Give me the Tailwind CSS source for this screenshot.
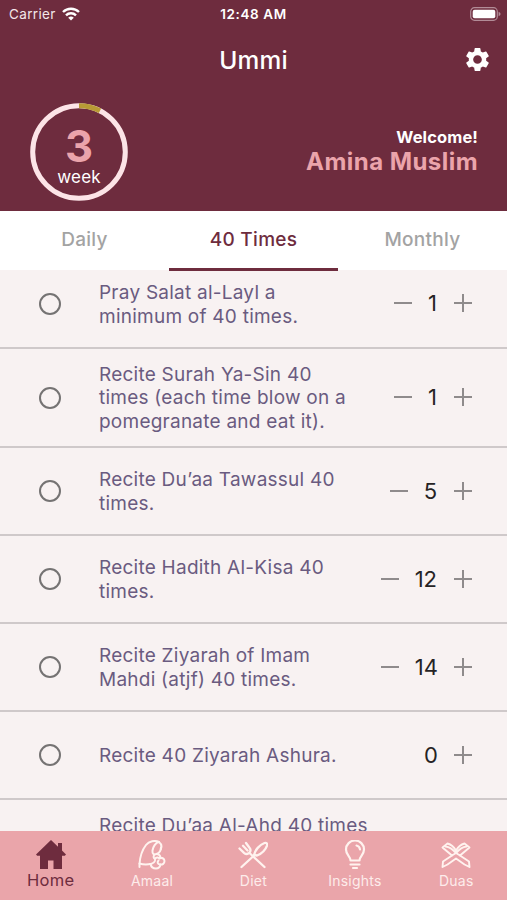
<!DOCTYPE html>
<html lang="en">
<head>
  <meta charset="UTF-8">
  <title>Ummi</title>
  <script src="https://cdn.jsdelivr.net/npm/@tailwindcss/browser@4"></script>
</head>
<body class="bg-[#f8f2f2]">
<div class="w-[507px] h-[900px] flex flex-col overflow-hidden font-['Inter','Liberation_Sans',sans-serif]">

  <!-- Header -->
  <header class="h-[211px] shrink-0 bg-[#6e2c3e] text-white">
    <div class="h-7 pl-[9px] pr-[6px] grid grid-cols-3 items-center">
      <div class="flex items-center gap-[6px]">
        <span class="text-[13.5px] tracking-[0.35px] text-[#f3e6e9]">Carrier</span>
        <svg class="w-[18px] h-[14px]" viewBox="0 0 18 14" fill="none" stroke="#fff" stroke-width="2.4">
          <path d="M1 5a11.4 11.4 0 0 1 16 0"/>
          <path d="M4 8.3a7.1 7.1 0 0 1 10 0"/>
          <path d="M9 13.6 6.2 10.8a4 4 0 0 1 5.6 0z" fill="#fff" stroke="none"/>
        </svg>
      </div>
      <div class="-ml-[3px] text-center whitespace-nowrap text-[13.5px] font-semibold tracking-[0.6px]">12:48 AM</div>
      <svg class="w-[31px] h-[14px] justify-self-end" viewBox="0 0 31 14">
        <rect x=".7" y=".7" width="26.6" height="12.6" rx="3.8" fill="none" stroke="#b28c97" stroke-width="1.2"/>
        <rect x="2.7" y="2.7" width="22.6" height="8.6" rx="2" fill="#fff"/>
        <path d="M28.6 4.8v4.4q2-.8 2-2.2t-2-2.2z" fill="#b28c97"/>
      </svg>
    </div>
    <div class="h-[64px] px-[15px] grid grid-cols-3 items-center">
      <h1 class="col-start-2 pt-px text-center text-[24.5px] font-medium tracking-[0.2px]">Ummi</h1>
      <svg class="w-[29px] h-[29px] -mt-px justify-self-end" viewBox="0 0 24 24" fill="#fff">
        <path d="M19.14 12.94c.04-.3.06-.61.06-.94 0-.32-.02-.64-.07-.94l2.03-1.58a.49.49 0 0 0 .12-.61l-1.92-3.32a.488.488 0 0 0-.59-.22l-2.39.96c-.5-.38-1.03-.7-1.62-.94l-.36-2.54a.484.484 0 0 0-.48-.41h-3.84c-.24 0-.43.17-.47.41l-.36 2.54c-.59.24-1.13.57-1.62.94l-2.39-.96c-.22-.08-.47 0-.59.22L2.74 8.87c-.12.21-.08.47.12.61l2.03 1.58c-.05.3-.09.63-.09.94s.02.64.07.94l-2.03 1.58a.49.49 0 0 0-.12.61l1.92 3.32c.12.22.37.29.59.22l2.39-.96c.5.38 1.03.7 1.62.94l.36 2.54c.05.24.24.41.48.41h3.84c.24 0 .44-.17.47-.41l.36-2.54c.59-.24 1.13-.56 1.62-.94l2.39.96c.22.08.47 0 .59-.22l1.92-3.32c.12-.22.07-.47-.12-.61l-2.01-1.58zM12 15.6c-1.98 0-3.6-1.62-3.6-3.6s1.62-3.6 3.6-3.6 3.6 1.62 3.6 3.6-1.62 3.6-3.6 3.6z"/>
      </svg>
    </div>
    <div class="pl-[30px] pr-[29px] pt-[11px] flex items-start justify-between">
      <div class="grid w-[98px] h-[98px]">
        <svg class="col-start-1 row-start-1 w-full h-full" viewBox="0 0 98 98" fill="none" stroke-width="5">
          <circle cx="49" cy="49" r="46.3" stroke="#fce4e7"/>
          <path d="M49 2.7a46.3 46.3 0 0 1 21 5" stroke="#b89a35"/>
        </svg>
        <div class="col-start-1 row-start-1 flex flex-col items-center pt-[26px]">
          <div class="text-[43.5px] leading-[34px] font-bold text-[#eba4ab]">3</div>
          <div class="mt-1 text-[17px] leading-[20px] tracking-[0.2px]">week</div>
        </div>
      </div>
      <div class="pt-[24px] text-right font-bold">
        <div class="text-[16.5px] leading-5 tracking-[0.1px]">Welcome!</div>
        <div class="mt-px text-[24px] leading-7 tracking-[0.45px] text-[#eba4ab]">Amina Muslim</div>
      </div>
    </div>
  </header>

  <!-- Tabs -->
  <nav class="h-[59px] shrink-0 bg-white grid grid-cols-3 text-center text-[19px] leading-[57px] font-medium tracking-[0.3px] text-[#a3a3a3]">
    <div>Daily</div>
    <div class="text-[#6e2c3e] border-b-[3px] border-[#6e2c3e]">40 Times</div>
    <div>Monthly</div>
  </nav>

  <!-- List, scrolled a little under the tabs -->
  <main class="flex-1 min-h-0 overflow-hidden text-[#6a5b80] text-[19px] leading-[23.3px] tracking-[0.24px]">
    <div class="h-[79px] pb-[10px] pl-[39px] pr-[35px] flex items-center border-b-2 border-[#cfc9ca]">
      <span class="w-[22px] h-[22px] shrink-0 rounded-full border-[2.5px] border-[#757373]"></span>
      <p class="ml-[38px] pt-[2px] whitespace-nowrap">Pray Salat al-Layl a<br>minimum of 40 times.</p>
      <div class="ml-auto flex items-center gap-4">
        <svg class="w-[18px] h-[18px]" viewBox="0 0 18 18" stroke="#8f8b8c" stroke-width="2"><path d="M0 9h18"/></svg>
        <span class="pt-px pr-px text-[22px] tracking-normal text-[#262324]">1</span>
        <svg class="w-[18px] h-[18px]" viewBox="0 0 18 18" stroke="#8f8b8c" stroke-width="2"><path d="M0 9h18M9 0v18"/></svg>
      </div>
    </div>
    <div class="h-[99px] pl-[39px] pr-[35px] flex items-center border-b-2 border-[#cfc9ca]">
      <span class="w-[22px] h-[22px] shrink-0 rounded-full border-[2.5px] border-[#757373]"></span>
      <p class="ml-[38px] pt-px whitespace-nowrap">Recite Surah Ya-Sin 40<br>times (each time blow on a<br>pomegranate and eat it).</p>
      <div class="ml-auto flex items-center gap-4">
        <svg class="w-[18px] h-[18px]" viewBox="0 0 18 18" stroke="#8f8b8c" stroke-width="2"><path d="M0 9h18"/></svg>
        <span class="pt-px pr-px text-[22px] tracking-normal text-[#262324]">1</span>
        <svg class="w-[18px] h-[18px]" viewBox="0 0 18 18" stroke="#8f8b8c" stroke-width="2"><path d="M0 9h18M9 0v18"/></svg>
      </div>
    </div>
    <div class="h-[88px] pl-[39px] pr-[35px] flex items-center border-b-2 border-[#cfc9ca]">
      <span class="w-[22px] h-[22px] shrink-0 rounded-full border-[2.5px] border-[#757373]"></span>
      <p class="ml-[38px] pt-px whitespace-nowrap">Recite Du’aa Tawassul 40<br>times.</p>
      <div class="ml-auto flex items-center gap-4">
        <svg class="w-[18px] h-[18px]" viewBox="0 0 18 18" stroke="#8f8b8c" stroke-width="2"><path d="M0 9h18"/></svg>
        <span class="pt-px pr-px text-[22px] tracking-normal text-[#262324]">5</span>
        <svg class="w-[18px] h-[18px]" viewBox="0 0 18 18" stroke="#8f8b8c" stroke-width="2"><path d="M0 9h18M9 0v18"/></svg>
      </div>
    </div>
    <div class="h-[88px] pl-[39px] pr-[35px] flex items-center border-b-2 border-[#cfc9ca]">
      <span class="w-[22px] h-[22px] shrink-0 rounded-full border-[2.5px] border-[#757373]"></span>
      <p class="ml-[38px] pt-px whitespace-nowrap">Recite Hadith Al-Kisa 40<br>times.</p>
      <div class="ml-auto flex items-center gap-4">
        <svg class="w-[18px] h-[18px]" viewBox="0 0 18 18" stroke="#8f8b8c" stroke-width="2"><path d="M0 9h18"/></svg>
        <span class="pt-px pr-px text-[22px] tracking-normal text-[#262324]">12</span>
        <svg class="w-[18px] h-[18px]" viewBox="0 0 18 18" stroke="#8f8b8c" stroke-width="2"><path d="M0 9h18M9 0v18"/></svg>
      </div>
    </div>
    <div class="h-[88px] pl-[39px] pr-[35px] flex items-center border-b-2 border-[#cfc9ca]">
      <span class="w-[22px] h-[22px] shrink-0 rounded-full border-[2.5px] border-[#757373]"></span>
      <p class="ml-[38px] pt-px whitespace-nowrap">Recite Ziyarah of Imam<br>Mahdi (atjf) 40 times.</p>
      <div class="ml-auto flex items-center gap-4">
        <svg class="w-[18px] h-[18px]" viewBox="0 0 18 18" stroke="#8f8b8c" stroke-width="2"><path d="M0 9h18"/></svg>
        <span class="pt-px text-[22px] tracking-normal text-[#262324]">14</span>
        <svg class="w-[18px] h-[18px]" viewBox="0 0 18 18" stroke="#8f8b8c" stroke-width="2"><path d="M0 9h18M9 0v18"/></svg>
      </div>
    </div>
    <div class="h-[88px] pl-[39px] pr-[35px] flex items-center border-b-2 border-[#cfc9ca]">
      <span class="w-[22px] h-[22px] shrink-0 rounded-full border-[2.5px] border-[#757373]"></span>
      <p class="ml-[38px] pt-[2px] whitespace-nowrap">Recite 40 Ziyarah Ashura.</p>
      <div class="ml-auto flex items-center gap-4">
        <span class="pt-px text-[22px] tracking-normal text-[#262324]">0</span>
        <svg class="w-[18px] h-[18px]" viewBox="0 0 18 18" stroke="#8f8b8c" stroke-width="2"><path d="M0 9h18M9 0v18"/></svg>
      </div>
    </div>
    <div class="pt-[14px] pl-[99px]">
      <p class="whitespace-nowrap">Recite Du’aa Al-Ahd 40 times</p>
    </div>
  </main>

  <!-- Bottom bar -->
  <footer class="h-[69px] shrink-0 bg-[#eaa5aa] grid grid-cols-5 text-center text-[14px] leading-[18px] tracking-[0.25px] text-[#fdeceb]">
    <div class="flex flex-col items-center pt-[9px] text-[#6e2c3e]">
      <svg class="w-[30px] h-[30px]" viewBox="0 0 30 30" fill="#6e2c3e">
        <path d="M15 0 0 14.500l1.200 1.200H4V29h8v-8.500h5.500V29H26V15.700h2.800L30 14.500l-4-3.900V3h-4v3.800z"/>
      </svg>
      <span class="text-[16.500px] leading-5">Home</span>
    </div>
    <div class="flex flex-col items-center pt-[9px]">
      <svg class="w-[30px] h-[30px]" viewBox="0 0 30 30" fill="none" stroke="#fff3ef" stroke-width="2" stroke-linecap="round" stroke-linejoin="round">
        <path d="M2.500 27v-3C3 17 5.500 9.500 9 5 12 1 18 0 22 2c2.500 2 3 4.500 1.800 7"/>
        <path d="M22 2c-3.500.5-6 5-6.500 8.500s1.500 4.500 4 3.500S24 10.500 24 7.500"/>
        <path d="M2.500 23.500c4 1.300 8 1.200 12 .3 1.500-.4 3-1.500 3.500-3"/>
        <path d="M17.500 14.500c-1.500 2-1 3.500.5 4.300M20 14c3 .5 4 2.500 2.500 4.200"/>
        <path d="M18 19c1-2 3.500-2 4.500-.5 2-1.500 5 0 5 2.500s-2 4-4.500 3.500c-2.500-.3-3-2.500-1.500-4"/>
        <path d="M13.500 24c.5 2.500 2.500 4.500 5.500 4.500 2.500 0 4-1.500 4.500-4"/>
      </svg>
      <span class="mt-[2px]">Amaal</span>
    </div>
    <div class="flex flex-col items-center pt-[9px]">
      <svg class="w-[30px] h-[30px]" viewBox="0 0 30 30" fill="none" stroke="#fff3ef" stroke-width="2.300" stroke-linecap="round" stroke-linejoin="round">
        <path d="M1.500 8.500 6 12.800c1.800 1.500 4 1.300 5.300 0s1.500-3.500 0-5.300L8 3M5 5.800l4.500 4.700M11.500 13 26.500 27"/>
        <path d="M3.500 27 15.500 16M16 15C17 10 21.500 5 26.500 3c2-.6 3 .4 2.500 2.500C27.500 10 23.500 13.500 19 15.500z"/>
      </svg>
      <span class="mt-[2px]">Diet</span>
    </div>
    <div class="flex flex-col items-center pt-[9px]">
      <svg class="w-[30px] h-[30px]" viewBox="0 0 30 30" fill="none" stroke="#fff3ef" stroke-width="2.200" stroke-linecap="round" stroke-linejoin="round">
        <path d="M10.500 20.500c0-4-4.500-5.500-4.500-11a9 9 0 0 1 18 0c0 5.500-4.500 7-4.500 11z"/>
        <path d="M16.500 5.500c2 .5 3.300 2 3.500 4M10.500 24.500h9M13 28h4"/>
      </svg>
      <span class="mt-[2px]">Insights</span>
    </div>
    <div class="flex flex-col items-center pt-[9px]">
      <svg class="w-[30px] h-[30px]" viewBox="0 0 30 30" fill="none" stroke="#fff3ef" stroke-width="1.900" stroke-linecap="round" stroke-linejoin="round">
        <path d="M15 10.500C13 7 10 4.500 6.500 3.500L1.500 7.500 11 15.500l4-2.500zM15 10.500C17 7 20 4.500 23.500 3.500l5 4L19 15.500 15 13"/>
        <path d="M4.500 6.500c4 .5 7 2.500 10.500 6.500 3.500-4 6.500-6 10.500-6.500"/>
        <path d="M11 15.500 2 21.500 1.500 27l5-2.500 8.500-6 8.500 6 5 2.500-.5-5.500-9-6"/>
      </svg>
      <span class="mt-[2px]">Duas</span>
    </div>
  </footer>

</div>
</body>
</html>
